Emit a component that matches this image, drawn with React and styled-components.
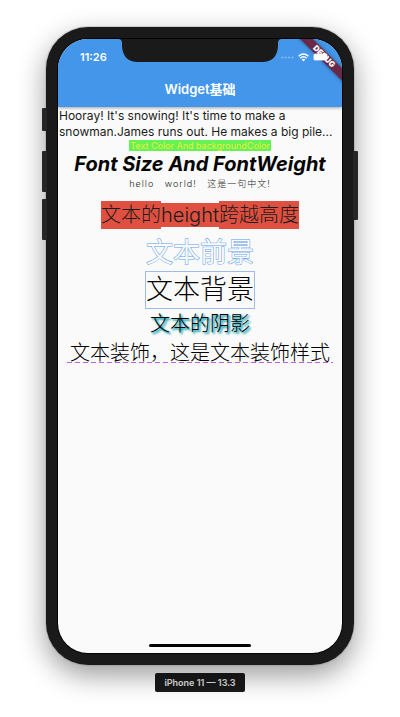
import React from "react";
import styled, { createGlobalStyle } from "styled-components";

const GlobalStyle = createGlobalStyle`
  body {
    margin: 0;
    background: #fff;
    font-family: Inter, "Noto Sans CJK SC", sans-serif;
    color: #1c1c1c;
  }
  * { box-sizing: border-box; }
`;

const Page = styled.div`
  min-height: 100vh;
  padding: 27px 46px 0;
  display: flex;
  flex-direction: column;
  align-items: center;
  overflow: hidden;
`;

const Phone = styled.div`
  position: relative;
  width: 100%;
  height: calc(100vh - 79px);
  min-height: 480px;
  max-width: 420px;
  padding: 12px;
  display: flex;
  border-radius: 42px;
  background: #1a1a1a;
  box-shadow: 0 0 0 1px rgba(120, 120, 120, 0.25), 0 10px 28px rgba(0, 0, 0, 0.4);
`;

const SideKey = styled.span`
  position: absolute;
  ${(p) => (p.$side === "left" ? "left: -4px;" : "right: -4px;")}
  top: ${(p) => p.$top}px;
  width: 5px;
  height: ${(p) => p.$length}px;
  border-radius: 1px;
  background: #262626;
`;

const Screen = styled.div`
  position: relative;
  flex: 1;
  min-width: 0;
  display: flex;
  flex-direction: column;
  overflow: hidden;
  border-radius: 30px;
  background: #fafafa;
  box-shadow: 0 0 0 1px #050505;
`;

const AppBar = styled.header`
  flex: none;
  background: #4396ea;
  color: #fff;
  box-shadow: 0 1px 3px rgba(0, 0, 0, 0.35);
`;

const StatusBar = styled.div`
  height: 32px;
  padding: 4px 13px 0 22px;
  display: flex;
  align-items: center;
  justify-content: space-between;
`;

const Clock = styled.time`
  font-size: 11px;
  font-weight: 600;
  line-height: 14px;
`;

const StatusIcons = styled.div`
  display: flex;
  align-items: center;
  gap: 4px;
`;

const Title = styled.h1`
  margin: 0;
  padding: 8px 0;
  font-size: 13px;
  line-height: 20px;
  height: 36px;
  font-weight: 600;
  text-align: center;
`;

const Notch = styled.svg`
  position: absolute;
  top: -1px;
  left: 50%;
  margin-left: -82px;
`;

const Ribbon = styled.span`
  position: absolute;
  z-index: 1;
  top: 13px;
  right: -24px;
  width: 84px;
  height: 9px;
  transform: rotate(45deg);
  background: rgba(112, 24, 46, 0.85);
  box-shadow: 0 0 4px rgba(0, 0, 0, 0.4);
  color: #fff;
  font-size: 8px;
  font-weight: 900;
  line-height: 9px;
  text-align: center;
  text-shadow: 0 0 1px #70182e;
`;

const BatteryLayer = styled.span`
  position: relative;
  z-index: 2;
  display: flex;
`;

const Content = styled.main`
  flex: 1;
  display: flex;
  flex-direction: column;
  align-items: center;
`;

const Paragraph = styled.p`
  align-self: stretch;
  margin: 1px 0 0;
  padding-left: 1px;
  font-size: 12px;
  line-height: 16px;
  font-weight: 400;
`;

const Highlighted = styled.span`
  padding: 0 1px;
  background: #64f254;
  color: #e9ef3c;
  font-size: 9px;
  line-height: 11px;
`;

const Heading = styled.h2`
  margin: 1px 0 0;
  font-size: 20px;
  line-height: 25px;
  font-weight: 700;
  font-style: italic;
  color: #050505;
`;

const Spaced = styled.p`
  margin: 0;
  font-size: 9px;
  line-height: 14px;
  font-weight: 300;
  letter-spacing: 1px;
  word-spacing: 7px;
`;

const HeightLine = styled.p`
  margin: 10px 0 0;
  display: flex;
  align-items: center;
  font-size: 20px;
  font-weight: 300;
  line-height: 24px;
`;

const RedRun = styled.span`
  padding: ${(p) => (p.$tall ? 2 : 0)}px 0;
  background: #df5040;
`;

const Outlined = styled.p`
  margin: 6px 0 0;
  font-size: 27px;
  line-height: 36px;
  font-weight: 400;
  color: #fafafa;
  -webkit-text-stroke: 1px #5c9ce8;
  paint-order: stroke fill;
`;

const Boxed = styled.p`
  margin: 0;
  border: 1px solid #9ebce6;
  font-size: 27px;
  line-height: 36px;
  font-weight: 300;
  color: #000;
`;

const Shadowed = styled.p`
  margin: 1px 0 0;
  font-size: 20px;
  line-height: 29px;
  font-weight: 300;
  color: #000;
  text-shadow: 1px 1px 2px #1fa3b4, 2px 2px 2px #1fa3b4;
`;

const Decorated = styled.p`
  margin: 0;
  padding: 0 3px;
  font-size: 20px;
  line-height: 29px;
  font-weight: 300;
  white-space: nowrap;
  color: #000;
  background: repeating-linear-gradient(90deg, #bd62d6 0 5px, transparent 5px 8px) 0 23px / 100% 1px no-repeat;
`;

const HomeIndicator = styled.span`
  align-self: center;
  width: 36%;
  height: 3px;
  margin-bottom: 6px;
  border-radius: 2px;
  background: #000;
`;

const DeviceLabel = styled.footer`
  margin-top: 8px;
  padding: 0 9px;
  border-radius: 2px;
  background: #1a1a1a;
  color: #e4e4e4;
  font-size: 9px;
  font-weight: 600;
  line-height: 19px;
`;

function Signal() {
  return (
    <svg width="13" height="3" viewBox="0 0 13 3" fill="#fff" fillOpacity="0.35">
      <circle cx="1.5" cy="1.5" r="1.1" />
      <circle cx="4.8" cy="1.5" r="1.1" />
      <circle cx="8.1" cy="1.5" r="1.1" />
      <circle cx="11.4" cy="1.5" r="1.1" />
    </svg>
  );
}

function Wifi() {
  return (
    <svg width="11" height="9" viewBox="0 0 11 9">
      <g fill="none" stroke="#fff" strokeWidth="1.5">
        <path d="M0.6 3.2Q5.5-1.3 10.4 3.2" />
        <path d="M2.3 5.2Q5.5 2.3 8.7 5.2" />
      </g>
      <path d="M3.7 6.6Q5.5 5.1 7.3 6.6L5.5 8.6Z" fill="#fff" />
    </svg>
  );
}

function Battery() {
  return (
    <BatteryLayer>
      <svg width="16" height="8" viewBox="0 0 16 8">
        <rect x="0.5" y="0.5" width="14" height="7" rx="2" fill="none" stroke="#fff" strokeOpacity="0.4" />
        <rect x="1" y="1" width="13" height="6" rx="1" fill="#fff" />
        <path d="M15.2 2.7V5.3" stroke="#fff" strokeOpacity="0.6" />
      </svg>
    </BatteryLayer>
  );
}

export default function App() {
  return (
    <>
      <GlobalStyle />
      <Page>
        <Phone>
          <SideKey $side="left" $top={81} $length={23} />
          <SideKey $side="left" $top={124} $length={41} />
          <SideKey $side="left" $top={172} $length={41} />
          <SideKey $side="right" $top={124} $length={69} />
          <Screen>
            <AppBar>
              <StatusBar>
                <Clock>11:26</Clock>
                <StatusIcons>
                  <Signal />
                  <Wifi />
                  <Battery />
                </StatusIcons>
              </StatusBar>
              <Title>Widget基础</Title>
            </AppBar>
            <Content>
              <Paragraph>
                Hooray! It's snowing! It's time to make a snowman.James runs out. He makes a big pile...
              </Paragraph>
              <Highlighted>Text Color And backgroundColor</Highlighted>
              <Heading>Font Size And FontWeight</Heading>
              <Spaced>hello world! 这是一句中文!</Spaced>
              <HeightLine>
                <RedRun $tall>文本的</RedRun>
                <RedRun>height</RedRun>
                <RedRun $tall>跨越高度</RedRun>
              </HeightLine>
              <Outlined>文本前景</Outlined>
              <Boxed>文本背景</Boxed>
              <Shadowed>文本的阴影</Shadowed>
              <Decorated>文本装饰，这是文本装饰样式</Decorated>
            </Content>
            <HomeIndicator />
            <Notch width="164" height="24" viewBox="0 0 164 24" fill="#1a1a1a">
              <path d="M0 0H164V1Q160 1 160 5V8Q159 24 144 24H20Q5 24 4 8V5Q4 1 0 1Z" />
            </Notch>
            <Ribbon>DEBUG</Ribbon>
          </Screen>
        </Phone>
        <DeviceLabel>iPhone 11 — 13.3</DeviceLabel>
      </Page>
    </>
  );
}
